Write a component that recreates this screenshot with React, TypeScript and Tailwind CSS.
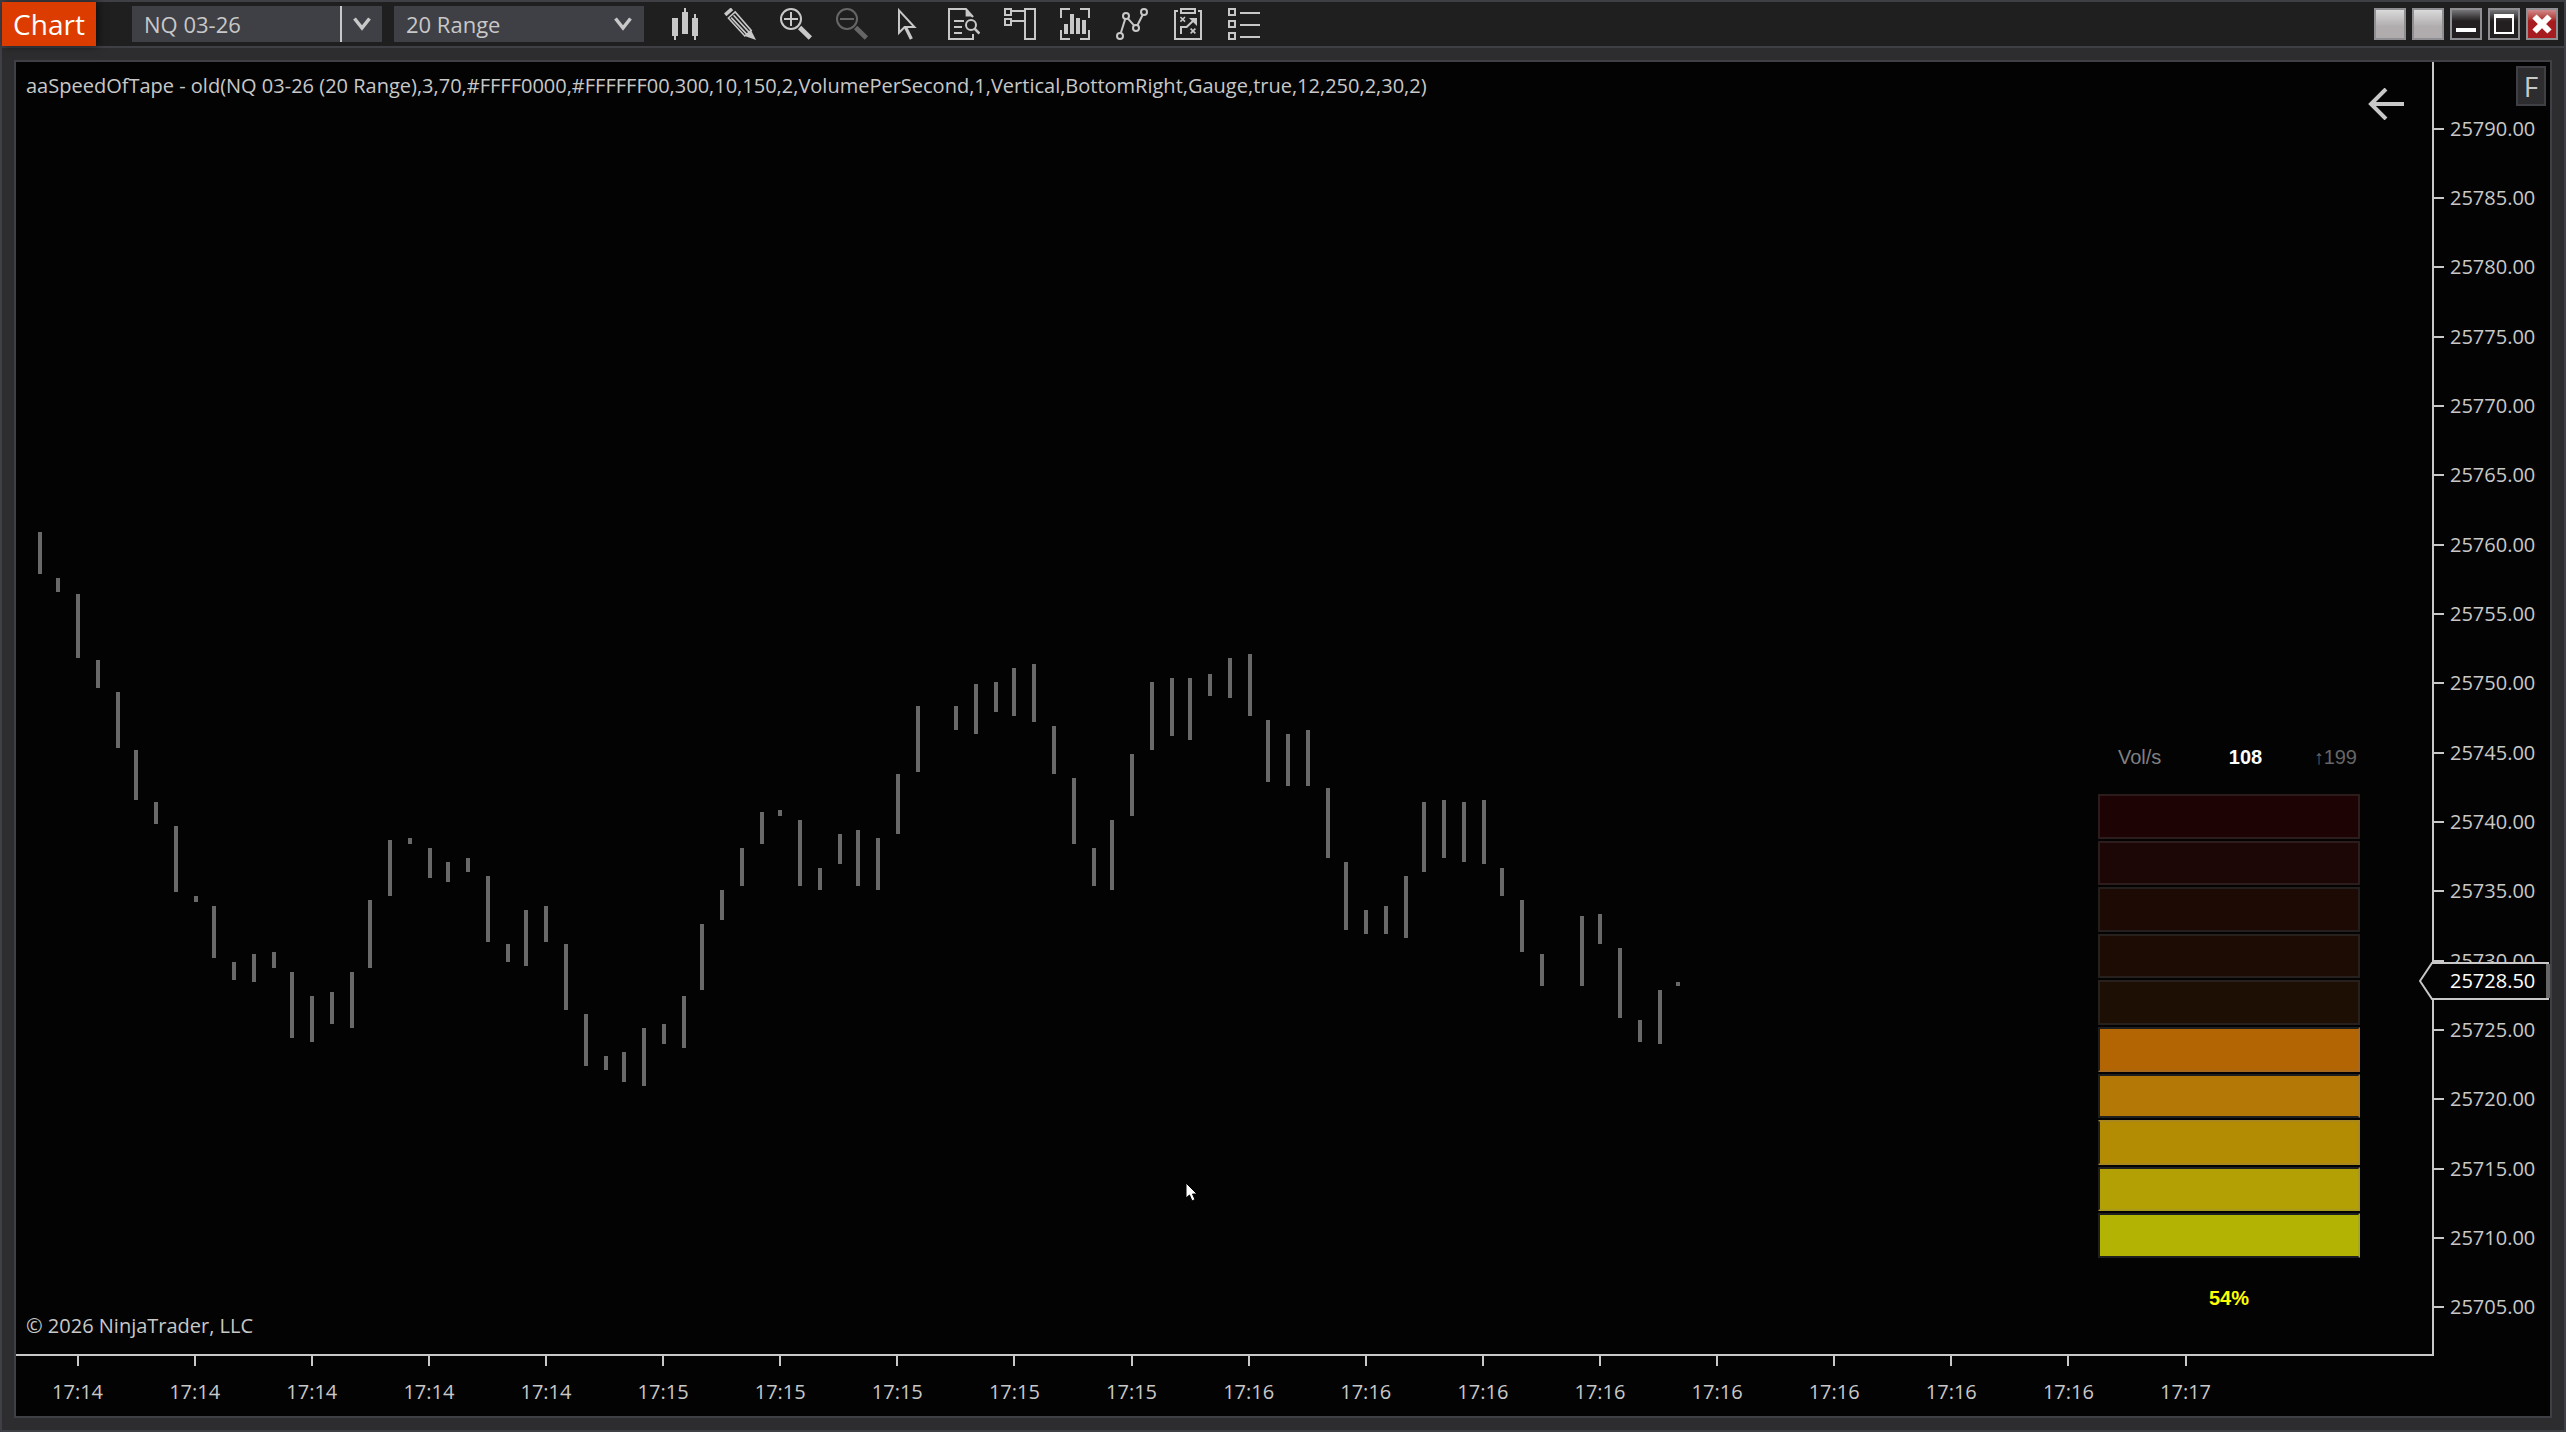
import React from 'react';

// [high, low] of each range bar in plot units, null where a bar has no drawn wick
const bars: ([number, number] | null)[] = [
  [532, 574], [578, 592], [594, 658], [660, 688], [692, 748], [750, 800], [802, 824], [826, 892],
  [896, 902], [906, 958], [962, 980], [954, 982], [952, 968], [972, 1038], [996, 1042], [992, 1024],
  [972, 1028], [900, 968], [840, 896], [838, 844], [848, 878], [862, 882], [858, 872], [876, 942],
  [944, 962], [910, 966], [906, 942], [944, 1010], [1014, 1066], [1056, 1070], [1052, 1082], [1028, 1086],
  [1024, 1044], [996, 1048], [924, 990], [890, 920], [848, 886], [812, 844], [810, 816], [820, 886],
  [868, 890], [834, 864], [830, 886], [838, 890], [774, 834], [706, 772], null, [706, 730],
  [684, 734], [682, 712], [668, 716], [664, 722], [726, 774], [778, 844], [848, 886], [820, 890],
  [754, 816], [682, 750], [678, 736], [678, 740], [674, 696], [658, 698], [654, 716], [720, 782],
  [734, 786], [730, 786], [788, 858], [862, 930], [910, 934], [906, 934], [876, 938], [802, 872],
  [800, 858], [802, 862], [800, 864], [868, 896], [900, 952], [954, 986], null, [916, 986],
  [914, 944], [948, 1018], [1020, 1042], [990, 1044], [982, 986],
];

const barPitch = 19.519;
const barX = (i: number) => 2 * Math.floor((38 + barPitch * i) / 2);

const prices = Array.from({ length: 18 }, (_, i) => (25790 - i * 5).toFixed(2));

const times = [
  '17:14', '17:14', '17:14', '17:14', '17:14', '17:15', '17:15', '17:15', '17:15', '17:15',
  '17:16', '17:16', '17:16', '17:16', '17:16', '17:16', '17:16', '17:16', '17:17',
];

const gaugeCells = [
  'bg-[#1d0303] border-[#2c1c1c]',
  'bg-[#1d0606] border-[#2c1c1c]',
  'bg-[#1d0a04] border-[#241e1c]',
  'bg-[#1d0c04] border-[#28201c]',
  'bg-[#1d0f04] border-[#28201c]',
  'bg-[#b36403] border-[#1f1f1f] border-r-[#a8681c] border-b-[#a8681c]',
  'bg-[#b37806] border-[#1f1f1f] border-r-[#a8781c]',
  'bg-[#b38c04] border-[#1f1f1f] border-t-[#a8881c] border-r-[#a8881c] border-b-[#a8881c]',
  'bg-[#b3a004] border-[#1f1f1f] border-r-[#a8981c] border-b-[#a8981c]',
  'bg-[#b3b303] border-[#1f1f1f] border-r-[#a8a81c]',
];

const tools = [
  {
    label: 'Chart style',
    icon: (
      <g fill="currentColor" shapeRendering="crispEdges">
        <path d="M2 5h3v9H4v2H3v-2H2zM8 0h1v2h1v11H7V2h1zM13 3h1v2h1v9h-1v2h-1v-2h-1V5h1z" />
      </g>
    ),
  },
  {
    label: 'Drawing tools',
    icon: (
      <g fill="none" stroke="currentColor">
        <path d="M.6 3.4 4 .4" strokeWidth="1.8" />
        <path d="M2.2 5 5.6 2l8 9.2-3.2 2.8z" strokeWidth=".8" />
        <path d="m3.6 4.8 7.8 8.4M4.8 3.6l7.8 8.6" strokeWidth=".8" />
        <path d="m10.4 14 3.2-2.8L16 16z" fill="currentColor" stroke="none" />
      </g>
    ),
  },
  {
    label: 'Zoom in',
    icon: (
      <g fill="none" stroke="currentColor">
        <circle cx="5.5" cy="5.5" r="5" />
        <path d="M5.5 2v7M2 5.5h7" />
        <path d="m9.8 9.8 5.4 5.2" strokeWidth="2.4" />
      </g>
    ),
  },
  {
    label: 'Zoom out',
    disabled: true,
    icon: (
      <g fill="none" stroke="currentColor">
        <circle cx="5.5" cy="5.5" r="5" />
        <path d="M2 5.5h7" />
        <path d="m9.8 9.8 5.4 5.2" strokeWidth="2.4" />
      </g>
    ),
  },
  {
    label: 'Pointer',
    icon: (
      <g fill="none" stroke="currentColor">
        <path d="M3.5 1.2v11.2l2.8-2.9h4.9z" />
        <path d="m6.8 9.8 2.9 5.7" strokeWidth="1.6" />
      </g>
    ),
  },
  {
    label: 'Data box',
    icon: (
      <g fill="none" stroke="currentColor">
        <path d="M12.5 13v2.5H.5V.5H9l3.500 4" />
        <path d="M8.800.5v3.700h4z" fill="currentColor" stroke="none" />
        <path d="M3 6.500h5M3 9.500h4M3 12.500h4" />
        <circle cx="11.500" cy="8.500" r="2.500" />
        <path d="m13.300 10.300 2.400 2.500" strokeWidth="1.300" />
      </g>
    ),
  },
  {
    label: 'Chart trader',
    icon: (
      <g fill="none" stroke="currentColor" shapeRendering="crispEdges">
        <path d="M.5.5h3v3h-3zM.5 5.500h3v3h-3zM10.500.5h5v15h-5zM4 1.500h6M4 6.500h6" />
      </g>
    ),
  },
  {
    label: 'Data series',
    icon: (
      <g shapeRendering="crispEdges">
        <path d="M.5 5V.5H5M10 .5h4.500V5M.5 11v4.500H5M10 15.500h4.500V11" fill="none" stroke="currentColor" />
        <path d="M2 8h2v5H2zM5 3h2v10H5zM8 5h2v8H8zM11 6h2v7h-2z" fill="currentColor" />
      </g>
    ),
  },
  {
    label: 'Indicators',
    icon: (
      <g fill="none" stroke="currentColor">
        <circle cx="2" cy="14" r="1.500" />
        <circle cx="5" cy="4" r="1.500" />
        <circle cx="10" cy="10" r="1.500" />
        <circle cx="14" cy="2" r="1.500" />
        <path d="M2.400 12.500 4.600 5.500M5.900 5.200l3.200 3.600M10.700 8.600l2.600-5.100" />
      </g>
    ),
  },
  {
    label: 'Strategies',
    icon: (
      <g fill="none" stroke="currentColor">
        <path d="M3 1.500H1.500v14h13v-14H13" shapeRendering="crispEdges" />
        <path d="M4.500.5h7v2h-7z" shapeRendering="crispEdges" />
        <path d="m4.200 4.500 2.300 2.300M6.500 4.500 4.200 6.800M9.300 10.300l2.400 2.400M11.700 10.300l-2.400 2.400" strokeWidth=".8" />
        <path d="M4.500 13V9.500h2.800L11 6" />
        <path d="M8.500 5h4v4z" fill="currentColor" stroke="none" />
      </g>
    ),
  },
  {
    label: 'Properties',
    icon: (
      <g fill="none" stroke="currentColor" shapeRendering="crispEdges">
        <path d="M.5.5h3v3h-3zM.5 6.500h3v3h-3zM.5 12.500h3v3h-3zM6 2.500h10M6 8.500h10M6 14.500h10" />
      </g>
    ),
  },
];

const Chevron = () => (
  <svg viewBox="0 0 18 14" className="h-[14px] w-[18px] text-[#c8c8c8]">
    <path d="M1.500 1.500 9 11l7.500-9.500" fill="none" stroke="currentColor" strokeWidth="3.500" />
  </svg>
);

const TitleBar = () => (
  <header className="flex h-[46px] items-center border-b-2 border-[#3f3f46] bg-[#1f1f1f]">
    <h1 className="flex h-full w-[94px] items-center justify-center bg-[#dc3c00] text-[28px] leading-none text-white shadow-[2px_0_8px_rgba(0,0,0,0.6)]">
      Chart
    </h1>

    <div className="ml-9 flex h-9 w-[250px] bg-[#3f3f46]">
      <input
        aria-label="Instrument"
        defaultValue="NQ 03-26"
        className="w-[210px] border-r-2 border-[#c8c8c8] bg-transparent pl-3 text-[22px] text-[#c8c8c8] outline-none"
      />
      <button aria-label="Choose instrument" className="flex flex-1 items-center justify-center">
        <Chevron />
      </button>
    </div>

    <div className="relative ml-3 h-9 w-[250px] bg-[#3f3f46]">
      <select
        aria-label="Interval"
        className="h-full w-full appearance-none bg-transparent pl-3 text-[22px] text-[#c8c8c8] outline-none"
      >
        <option>20 Range</option>
      </select>
      <span className="pointer-events-none absolute inset-y-0 right-3 flex items-center">
        <Chevron />
      </span>
    </div>

    <nav className="ml-6 flex gap-6">
      {tools.map((tool) => (
        <button
          key={tool.label}
          aria-label={tool.label}
          disabled={tool.disabled}
          className={tool.disabled ? 'text-[#666666]' : 'text-[#c8c8c8]'}
        >
          <svg viewBox="0 0 16 16" className="h-8 w-8">
            {tool.icon}
          </svg>
        </button>
      ))}
    </nav>

    <div className="mr-[6px] ml-auto flex gap-[6px]">
      <button aria-label="Link instrument" className="h-8 w-8 border-2 border-[#8f8f93] bg-linear-to-b from-[#dadada] to-[#b0acae] to-60%" />
      <button aria-label="Link interval" className="h-8 w-8 border-2 border-[#8f8f93] bg-linear-to-b from-[#dadada] to-[#b0acae] to-60%" />
      <button aria-label="Minimize" className="flex h-8 w-8 items-end border-2 border-[#8f8f93] bg-linear-to-b from-[#77777a] to-[#231f20] to-40% px-1 pb-[6px]">
        <span className="h-1 w-full bg-white" />
      </button>
      <button aria-label="Maximize" className="flex h-8 w-8 items-center justify-center border-2 border-[#8f8f93] bg-linear-to-b from-[#77777a] to-[#231f20] to-40%">
        <span className="h-5 w-5 border-2 border-t-4 border-white" />
      </button>
      <button aria-label="Close" className="flex h-8 w-8 items-center justify-center border-2 border-[#8f8f93] bg-linear-to-b from-[#d08a8c] to-[#a61c20] to-40%">
        <svg viewBox="0 0 20 20" className="h-5 w-5">
          <path d="m2.500 2.500 15 15M17.500 2.500l-15 15" stroke="white" strokeWidth="6" />
        </svg>
      </button>
    </div>
  </header>
);

const Gauge = () => (
  <div className="absolute right-[72px] bottom-11 w-[262px] font-['Liberation_Sans',Arial,sans-serif] text-[20px] leading-6">
    <div className="flex justify-between pr-[3px] pl-5 text-[#808080]">
      <span className="w-24">Vol/s</span>
      <span className="font-bold text-white">108</span>
      <span className="w-20 text-right text-[#666666]">↑199</span>
    </div>
    <div className="mt-[25px] flex h-[464px] flex-col gap-[2px]">
      {gaugeCells.map((cell) => (
        <div key={cell} className={`flex-1 border-2 ${cell}`} />
      ))}
    </div>
    <p className="mt-7 text-center font-bold text-[#ffff00]">54%</p>
  </div>
);

const Plot = () => (
  <section className="relative min-w-0 border-r-2 border-b-2 border-[#c8c8c8]">
    <svg viewBox="16 62 2416 1292" preserveAspectRatio="none" className="absolute inset-0 h-full w-full">
      {bars.map(
        (bar, i) =>
          bar && (
            <rect
              key={i}
              x={barX(i)}
              y={bar[0]}
              width={4}
              height={bar[1] - bar[0]}
              fill="#696969"
              shapeRendering="crispEdges"
            />
          ),
      )}
    </svg>

    <div className="relative flex h-full flex-col justify-between pt-2 pr-7 pb-3 pl-[10px] text-[20px] leading-8">
      <div className="flex items-start justify-between">
        <p className="whitespace-nowrap">
          aaSpeedOfTape - old(NQ 03-26 (20 Range),3,70,#FFFF0000,#FFFFFF00,300,10,150,2,VolumePerSecond,1,Vertical,BottomRight,Gauge,true,12,250,2,30,2)
        </p>
        <button aria-label="Back" className="mt-[18px]">
          <svg viewBox="0 0 36 32" className="h-8 w-9">
            <path d="M36 16H3M18 1 3 16l15 15" fill="none" stroke="currentColor" strokeWidth="4" />
          </svg>
        </button>
      </div>
      <p>© 2026 NinjaTrader, LLC</p>
    </div>

    <Gauge />

    <svg viewBox="0 0 12 20" className="absolute top-[1120px] left-[1169px] h-5 w-3">
      <path d="M1 1v15l3.500-3 2.500 6 3-1.500L7.500 12H12z" fill="white" stroke="black" />
    </svg>
  </section>
);

const PriceAxis = () => (
  <aside className="relative flex flex-col pt-8 pb-[14px] text-[20px] leading-6">
    {prices.map((price) => (
      <div key={price} className="flex flex-1 items-center gap-[6px]">
        <span className="h-[2px] w-[10px] bg-[#c8c8c8]" />
        <span>{price}</span>
      </div>
    ))}
    <button className="absolute top-1 right-1 h-10 w-[30px] border-2 border-[#3f3f46] bg-[#2d2d30] text-[28px] leading-8">
      F
    </button>
    <div className="absolute top-[900px] -left-[15px] flex h-[38px] w-[131px] items-center text-white">
      <svg viewBox="0 0 131 38" className="absolute inset-0 h-full w-full">
        <path d="M1 19 13 1h116v36H13z" fill="#030303" stroke="#c8c8c8" strokeWidth="2" />
        <path d="M129 2v34" stroke="#666666" strokeWidth="4" />
      </svg>
      <span className="relative pl-[31px]">25728.50</span>
    </div>
  </aside>
);

const TimeAxis = () => (
  <footer className="flex pr-[190px] pl-[3px] text-[20px] leading-6">
    {times.map((time, i) => (
      <div key={i} className="flex flex-1 flex-col items-center">
        <span className="h-[10px] w-[2px] bg-[#c8c8c8]" />
        <span className="mt-[14px]">{time}</span>
      </div>
    ))}
  </footer>
);

const App = () => {
  return (
    <div className="flex h-screen flex-col border-2 border-[#3f3f46] bg-[#2d2d30] font-['Open_Sans','Noto_Sans',sans-serif] text-[#c8c8c8]">
      <TitleBar />
      <main className="m-3 grid min-h-0 flex-1 grid-cols-[1fr_116px] grid-rows-[1fr_60px] border-2 border-[#3f3f46] bg-[#030303]">
        <Plot />
        <PriceAxis />
        <TimeAxis />
      </main>
    </div>
  );
};

export default App;
